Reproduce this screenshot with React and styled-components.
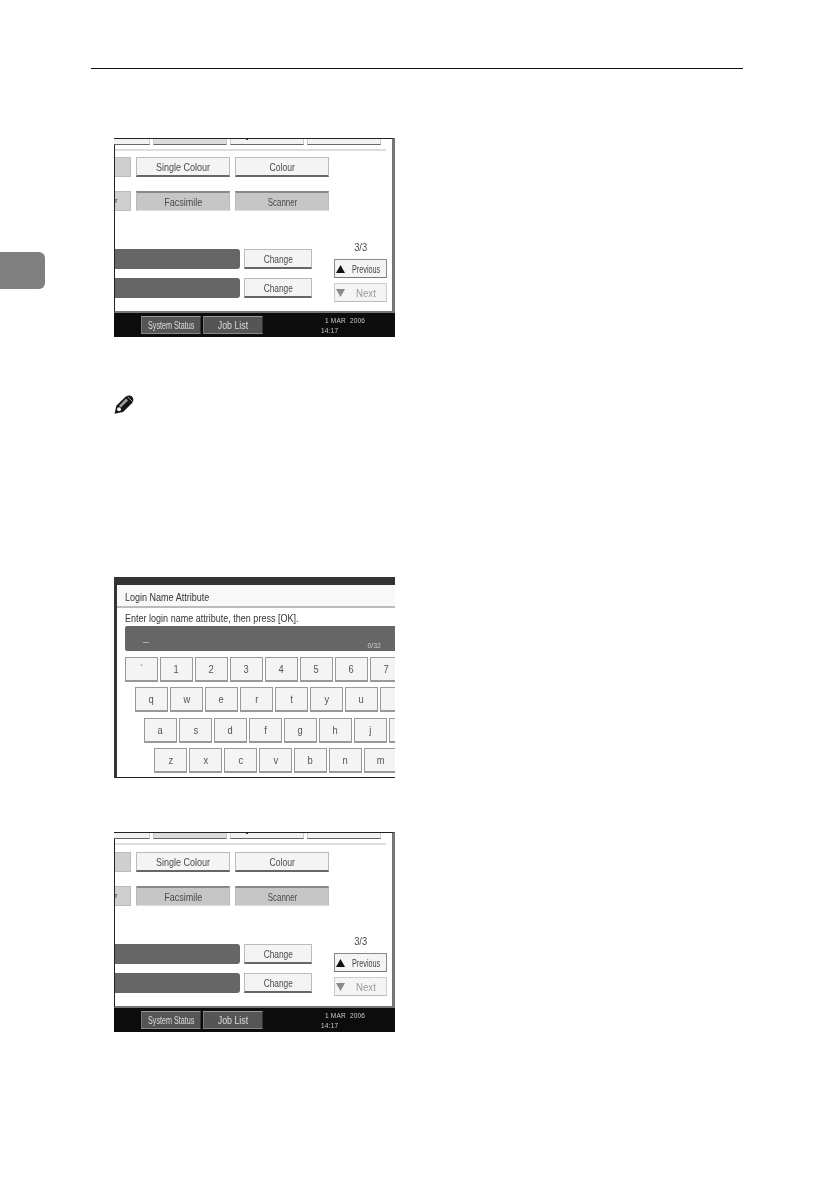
import React from "react";
import styled, { createGlobalStyle } from "styled-components";

const Global = createGlobalStyle`
  html, body { margin: 0; padding: 0; background: #fff; }
  body { font-family: "Liberation Sans", Arial, sans-serif; }
`;

const Page = styled.div`
  width: 833px;
  height: 1178px;
  overflow: hidden;
  display: flex;
  flex-direction: column;
  background: #fff;
`;
const HeaderRule = styled.div`
  height: 1px;
  margin: 68px 90px 0 91px;
  background: #111;
`;
const Body = styled.div`
  display: flex;
  align-items: flex-start;
`;
const SideTab = styled.div`
  flex: none;
  width: 45px;
  height: 37px;
  margin-top: 183px;
  background: #808080;
  border-radius: 0 6px 6px 0;
`;
const Content = styled.div`
  margin-left: 69px;
  padding-top: 69px;
  display: flex;
  flex-direction: column;
`;
const NoteIcon = styled.svg`
  display: block;
  width: 20px;
  height: 19px;
  margin-top: 58px;
`;

const Screen = styled.div`
  width: 281px;
  height: ${(p) => p.$h}px;
  margin-top: ${(p) => p.$mt || 0}px;
  box-sizing: border-box;
  overflow: hidden;
  display: flex;
  flex-direction: column;
  background: #fff;
  color: #4a4a4a;
  font-size: 11px;
  filter: blur(0.35px);
`;
const Label = styled.span`
  display: inline-block;
  flex: none;
  white-space: nowrap;
  transform: scaleX(${(p) => p.$sx || 0.78});
  transform-origin: ${(p) => (p.$left ? "left" : "center")} center;
`;
const Panel = styled.div`
  flex: 1;
  min-height: 0;
  border-top: 1px solid #222;
  border-left: 1px solid #222;
  border-right: 3px solid #777;
  border-bottom: 2px solid #777;
  display: flex;
  flex-direction: column;
`;
const Tabs = styled.div`
  display: flex;
  gap: 3px;
  margin-left: -39px;
  height: 6px;
  flex: none;
`;
const Tab = styled.div`
  position: relative;
  flex: none;
  width: 74px;
  box-sizing: border-box;
  background: ${(p) => (p.$dim ? "#dcdcdc" : "#f2f2f2")};
  border: 1px solid #ccc;
  border-top: none;
  border-bottom: 1px solid #666;
  &::after {
    content: "";
    display: ${(p) => (p.$mark ? "block" : "none")};
    position: absolute;
    left: 15px;
    top: 0;
    width: 2px;
    height: 1px;
    background: #333;
  }
`;
const Rule = styled.div`
  flex: none;
  height: 2px;
  margin: 4px 6px 0 0;
  background: #ddd;
`;
const Modes = styled.div`
  display: grid;
  grid-template-columns: 16px 94px 94px;
  grid-auto-rows: 20px;
  column-gap: 5px;
  row-gap: 14px;
  margin-top: ${(p) => p.$mt}px;
  flex: none;
`;
const Btn = styled.div`
  box-sizing: border-box;
  display: flex;
  align-items: center;
  justify-content: center;
  white-space: nowrap;
  border: 1px solid #bbb;
  border-bottom: 2px solid #666;
  background: #f4f4f4;
`;
const ActiveBtn = styled(Btn)`
  background: #c6c6c6;
  border: 1px solid #bbb;
  border-top: 2px solid #888;
  border-bottom: 1px solid #ddd;
`;
const Stub = styled.div`
  box-sizing: border-box;
  background: #cfcfcf;
  border: 1px solid #bbb;
  border-left: none;
  overflow: hidden;
  line-height: 17px;
  color: #333;
`;
const StubGlyph = styled.span`
  display: block;
  font-size: 8px;
`;
const Lower = styled.div`
  flex: 1;
  min-height: 0;
  display: flex;
  align-items: flex-start;
`;
const Settings = styled.div`
  flex: none;
  width: 197px;
  margin-top: ${(p) => p.$mt}px;
  display: grid;
  grid-template-columns: 125px 68px;
  grid-auto-rows: 20px;
  column-gap: 4px;
  row-gap: 9px;
`;
const Field = styled.div`
  background: #666;
  border-radius: 0 3px 3px 0;
`;
const Pager = styled.div`
  flex: none;
  width: 53px;
  margin-left: 22px;
  margin-top: ${(p) => p.$mt}px;
  display: flex;
  flex-direction: column;
`;
const PageNo = styled.div`
  text-align: center;
  height: 18px;
  line-height: 13px;
`;
const PagerBtn = styled(Btn)`
  height: 19px;
  margin-top: ${(p) => p.$mt || 0}px;
  gap: 7px;
  padding-left: 1px;
  justify-content: flex-start;
  color: ${(p) => (p.$off ? "#9a9a9a" : "#444")};
  border-color: ${(p) => (p.$off ? "#ccc" : "#888")};
  border-bottom: 1px solid ${(p) => (p.$off ? "#bbb" : "#777")};
`;
const Tri = styled.svg`
  flex: none;
  width: 9px;
  height: 8px;
`;
const Footer = styled.div`
  flex: none;
  height: 24px;
  box-sizing: border-box;
  background: #0c0c0c;
  display: flex;
  padding: 3px 0 0 27px;
  gap: 2px;
`;
const FootBtn = styled.div`
  flex: none;
  width: 60px;
  height: 18px;
  box-sizing: border-box;
  display: flex;
  align-items: center;
  justify-content: center;
  background: #555;
  color: #ddd;
  font-size: ${(p) => (p.$big ? 11 : 10)}px;
  border-top: 1px solid #999;
  border-left: 1px solid #777;
  border-right: 1px solid #333;
  border-bottom: 1px solid #888;
`;
const Clock = styled.div`
  margin-left: 56px;
  color: #ccc;
  font-size: 6.5px;
  line-height: 10px;
  letter-spacing: 0.2px;
  white-space: pre;
`;

const KbPanel = styled.div`
  flex: 1;
  min-height: 0;
  border-top: 8px solid #333;
  border-left: 3px solid #333;
  border-bottom: 1px solid #222;
  display: flex;
  flex-direction: column;
`;
const Title = styled.div`
  flex: none;
  height: 23px;
  box-sizing: border-box;
  display: flex;
  align-items: center;
  padding: 2px 0 0 8px;
  border-bottom: 2px solid #bbb;
  background: #f8f8f8;
  color: #333;
`;
const Prompt = styled.div`
  flex: none;
  height: 18px;
  line-height: 21px;
  padding-left: 8px;
  color: #333;
  white-space: nowrap;
`;
const Input = styled.div`
  flex: none;
  height: 25px;
  margin-left: 8px;
  box-sizing: border-box;
  background: #666;
  border-radius: 2px 0 0 2px;
  color: #ccc;
  display: flex;
  justify-content: space-between;
  padding: 6px 14px 0 18px;
  font-size: 10px;
`;
const Count = styled.span`
  font-size: 7px;
  padding-top: 10px;
`;
const Keyboard = styled.div`
  margin-top: 6px;
  display: flex;
  flex-direction: column;
  gap: 5.33px;
`;
const KeyRow = styled.div`
  display: flex;
  gap: 2px;
  height: 25px;
  margin-left: ${(p) => p.$off}px;
`;
const Key = styled(Btn)`
  flex: none;
  width: 33px;
  height: 25px;
  color: #555;
  border-color: #999;
`;

const Icon = () => (
  <NoteIcon viewBox="0 0 20 19">
    <path d="M0.5 18.8 L2.5 10.5 L11.5 1.8 Q15 -0.8 18 1.5 Q20.6 4.5 18.2 8 L9 17 Z" fill="#151515" />
    <path d="M5 10.8 L12.2 3.6 L14 5.4 L6.8 12.6 Z" fill="#a0a0a0" />
    <path d="M13.6 1.6 L18.6 6.6" stroke="#bdbdbd" strokeWidth="0.8" />
    <circle cx="5" cy="14.2" r="2" fill="#eee" />
  </NoteIcon>
);

const Up = ({ c }) => (
  <Tri viewBox="0 0 9 8"><path d="M4.5 0 L9 8 H0 Z" fill={c} /></Tri>
);
const Down = ({ c }) => (
  <Tri viewBox="0 0 9 8"><path d="M0 0 H9 L4.5 8 Z" fill={c} /></Tri>
);

const NextLabel = styled(Label)`
  margin-left: 4px;
`;

const StatusScreen = ({ h, mt, modesTop, setTop, pagerTop }) => (
  <Screen $h={h} $mt={mt}>
    <Panel>
      <Tabs>
        <Tab />
        <Tab $dim />
        <Tab $mark />
        <Tab />
      </Tabs>
      <Rule />
      <Modes $mt={modesTop}>
        <Stub />
        <Btn><Label $sx={0.82}>Single Colour</Label></Btn>
        <Btn><Label>Colour</Label></Btn>
        <Stub><StubGlyph>r</StubGlyph></Stub>
        <ActiveBtn><Label $sx={0.82}>Facsimile</Label></ActiveBtn>
        <ActiveBtn><Label $sx={0.72}>Scanner</Label></ActiveBtn>
      </Modes>
      <Lower>
        <Settings $mt={setTop}>
          <Field />
          <Btn><Label $sx={0.76}>Change</Label></Btn>
          <Field />
          <Btn><Label $sx={0.76}>Change</Label></Btn>
        </Settings>
        <Pager $mt={pagerTop}>
          <PageNo><Label $sx={0.85}>3/3</Label></PageNo>
          <PagerBtn><Up c="#111" /><Label $sx={0.66} $left>Previous</Label></PagerBtn>
          <PagerBtn $off $mt={5}><Down c="#8a8a8a" /><NextLabel $sx={0.88} $left>Next</NextLabel></PagerBtn>
        </Pager>
      </Lower>
    </Panel>
    <Footer>
      <FootBtn><Label $sx={0.72}>System Status</Label></FootBtn>
      <FootBtn $big><Label $sx={0.8}>Job List</Label></FootBtn>
      <Clock>{"  1 MAR  2006\n14:17"}</Clock>
    </Footer>
  </Screen>
);

const keyRows = [
  { off: 8, keys: ["`", "1", "2", "3", "4", "5", "6", "7"] },
  { off: 18, keys: ["q", "w", "e", "r", "t", "y", "u", ""] },
  { off: 27, keys: ["a", "s", "d", "f", "g", "h", "j", ""] },
  { off: 37, keys: ["z", "x", "c", "v", "b", "n", "m"] },
];

export default function App() {
  return (
    <Page>
      <Global />
      <HeaderRule />
      <Body>
        <SideTab />
        <Content>
          <StatusScreen h={199} modesTop={6} setTop={38} pagerTop={30} />
          <Icon />
          <Screen $h={201} $mt={163}>
            <KbPanel>
              <Title><Label $sx={0.82} $left>Login Name Attribute</Label></Title>
              <Prompt><Label $sx={0.82} $left>Enter login name attribute, then press [OK].</Label></Prompt>
              <Input>
                <span>_</span>
                <Count>0/32</Count>
              </Input>
              <Keyboard>
                {keyRows.map((r) => (
                  <KeyRow key={r.off} $off={r.off}>
                    {r.keys.map((k) => (
                      <Key key={k || "blank"}><Label $sx={0.85}>{k}</Label></Key>
                    ))}
                  </KeyRow>
                ))}
              </Keyboard>
            </KbPanel>
          </Screen>
          <StatusScreen h={200} mt={54} modesTop={7} setTop={38} pagerTop={29} />
        </Content>
      </Body>
    </Page>
  );
}
